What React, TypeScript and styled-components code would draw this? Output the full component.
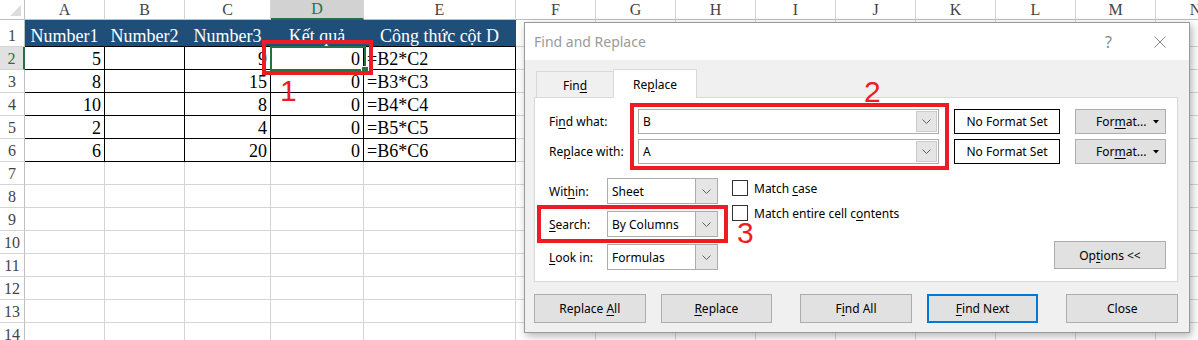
import React from "react";
import styled, { createGlobalStyle, css } from "styled-components";

const GlobalStyle = createGlobalStyle`
  html, body { margin: 0; padding: 0; background: #fff; }
  body { width: 1198px; height: 340px; overflow: hidden; font-family: "Liberation Serif", serif; }
`;

const COLS = "25px 80px 80px 86px 93px 152px repeat(9, 80px)";
const RED = "#ed1c24";
const GREEN = "#217346";

const Screen = styled.div`
  position: relative;
  width: 1198px;
  height: 340px;
  overflow: hidden;
  background: #fff;
`;

const Sheet = styled.div`
  display: flex;
  flex-direction: column;
  font-family: "Liberation Serif", serif;
`;

const Row = styled.div<{ $h: number }>`
  display: grid;
  grid-template-columns: ${COLS};
  height: ${(p) => p.$h}px;
`;

const Corner = styled.div`
  box-sizing: border-box;
  border-right: 1px solid #bfbfbf;
  border-bottom: 1px solid #bfbfbf;
  display: flex;
  align-items: flex-end;
  justify-content: flex-end;
  padding: 0 3px 3px 0;
`;

const ColHead = styled.div<{ $sel?: boolean }>`
  box-sizing: border-box;
  display: flex;
  align-items: center;
  justify-content: center;
  font-size: 16px;
  line-height: 16px;
  color: #444;
  border-right: 1px solid #d4d4d4;
  border-bottom: 1px solid #bfbfbf;
  ${(p) =>
    p.$sel &&
    css`
      background: #d2d2d2;
      color: ${GREEN};
      border-bottom: 2px solid ${GREEN};
    `}
`;

const RowHead = styled.div<{ $sel?: boolean }>`
  box-sizing: border-box;
  display: flex;
  align-items: flex-end;
  justify-content: center;
  padding-bottom: 1px;
  font-size: 16px;
  line-height: 18px;
  color: #444;
  border-right: 1px solid #bfbfbf;
  border-bottom: 1px solid #d4d4d4;
  ${(p) =>
    p.$sel &&
    css`
      background: #e1e1e1;
      color: ${GREEN};
      border-right: 2px solid ${GREEN};
    `}
`;

type Kind = "head" | "data" | "plain";

const Cell = styled.div<{ $kind: Kind; $align?: "left" | "right" | "center" }>`
  box-sizing: border-box;
  display: flex;
  align-items: flex-end;
  padding: 0 3px 1px 3px;
  font-size: 18px;
  line-height: 18px;
  white-space: nowrap;
  overflow: visible;
  justify-content: ${(p) =>
    p.$align === "right" ? "flex-end" : p.$align === "center" ? "center" : "flex-start"};
  ${(p) =>
    p.$kind === "head"
      ? css`
          background: #1f4e78;
          color: #fff;
          border-right: 1px solid #1f4e78;
          border-bottom: 1px solid #000;
        `
      : p.$kind === "data"
      ? css`
          color: #000;
          border-right: 1px solid #000;
          border-bottom: 1px solid #000;
        `
      : css`
          border-right: 1px solid #d4d4d4;
          border-bottom: 1px solid #d4d4d4;
        `}
`;

/* ---------- overlays ---------- */

const Selection = styled.div`
  position: absolute;
  left: 270px;
  top: 46px;
  width: 96px;
  height: 25px;
  box-sizing: border-box;
  border: 2px solid ${GREEN};
`;

const FillHandle = styled.div`
  position: absolute;
  right: -5px;
  bottom: -5px;
  width: 6px;
  height: 6px;
  background: ${GREEN};
  border: 1px solid #fff;
`;

const RedBox = styled.div<{ $x: number; $y: number; $w: number; $h: number }>`
  position: absolute;
  left: ${(p) => p.$x}px;
  top: ${(p) => p.$y}px;
  width: ${(p) => p.$w}px;
  height: ${(p) => p.$h}px;
  box-sizing: border-box;
  border: 4px solid ${RED};
  z-index: 5;
`;

const Marker = styled.div<{ $x: number; $y: number }>`
  position: absolute;
  left: ${(p) => p.$x}px;
  top: ${(p) => p.$y}px;
  font-family: "Liberation Sans", Arial, sans-serif;
  font-size: 30px;
  line-height: 30px;
  color: ${RED};
  z-index: 5;
`;

/* ---------- dialog ---------- */

const Dialog = styled.div`
  position: absolute;
  left: 524px;
  top: 22px;
  width: 666px;
  height: 311px;
  box-sizing: border-box;
  border: 1px solid #9a9a9a;
  background: #f0f0f0;
  box-shadow: 2px 3px 8px rgba(0, 0, 0, 0.3);
  display: flex;
  flex-direction: column;
  font-family: "Noto Sans", "Open Sans", sans-serif;
  font-size: 12px;
  color: #000;
  z-index: 3;
`;

const TitleBar = styled.div`
  height: 37px;
  flex: none;
  background: #fff;
  display: flex;
  align-items: center;
  padding: 0 23px 0 9px;
`;

const Title = styled.div`
  font-size: 14px;
  color: #9a9a9a;
`;

const HelpMark = styled.div`
  margin-left: auto;
  font-size: 16px;
  color: #8a8a8a;
  margin-right: 42px;
`;

const Body = styled.div`
  flex: 1;
  display: flex;
  flex-direction: column;
  padding: 9px 11px 0 9px;
`;

const TabStrip = styled.div`
  display: flex;
  align-items: flex-end;
  height: 29px;
  padding-left: 2px;
  margin-bottom: -1px;
  position: relative;
  z-index: 1;
`;

const Tab = styled.div<{ $active?: boolean; $w: number }>`
  box-sizing: border-box;
  width: ${(p) => p.$w}px;
  display: flex;
  align-items: center;
  justify-content: center;
  border: 1px solid #d9d9d9;
  border-bottom: none;
  ${(p) =>
    p.$active
      ? css`
          height: 29px;
          background: #fff;
        `
      : css`
          height: 26px;
          margin-bottom: 1px;
          background: #f0f0f0;
          border-right: none;
          padding-top: 2px;
        `}
`;

const Panel = styled.div`
  box-sizing: border-box;
  height: 185px;
  background: #fff;
  border: 1px solid #d9d9d9;
  padding: 11px 11px 0 14px;
  display: flex;
  flex-direction: column;
`;

const TopGrid = styled.div`
  display: grid;
  grid-template-columns: 74px 301px 106px 91px;
  grid-auto-rows: 25px;
  column-gap: 15px;
  row-gap: 5px;
`;

const FieldLabel = styled.div`
  display: flex;
  align-items: center;
  white-space: nowrap;
`;

const Key = styled.span`
  text-decoration: underline;
  text-underline-offset: 2px;
`;

const Combo = styled.div`
  box-sizing: border-box;
  display: flex;
  border: 1px solid #acacac;
  background: #fff;
`;

const ComboValue = styled.div`
  flex: 1;
  display: flex;
  align-items: center;
  padding-left: 4px;
`;

const ComboDrop = styled.div`
  box-sizing: border-box;
  width: 21px;
  margin: 1px;
  background: #e5e5e5;
  border: 1px solid #cccccc;
  display: flex;
  align-items: center;
  justify-content: center;
`;

const FormatStatus = styled.div`
  box-sizing: border-box;
  border: 1px solid #000;
  background: #fff;
  display: flex;
  align-items: center;
  justify-content: center;
  white-space: nowrap;
`;

const Button = styled.div<{ $w?: number; $h?: number; $focus?: boolean; $gapBefore?: boolean }>`
  box-sizing: border-box;
  width: ${(p) => p.$w ?? 112}px;
  height: ${(p) => p.$h ?? 29}px;
  background: #e1e1e1;
  border: ${(p) => (p.$focus ? "2px solid #0078d7" : "1px solid #adadad")};
  display: flex;
  align-items: center;
  justify-content: center;
  white-space: nowrap;
  margin-left: ${(p) => (p.$gapBefore ? "13px" : "0")};
`;

const FormatButton = styled.div`
  box-sizing: border-box;
  background: #e1e1e1;
  border: 1px solid #adadad;
  display: flex;
  align-items: center;
  padding: 0 6px 0 20px;
  white-space: nowrap;
`;

const Caret = styled.svg`
  margin-left: auto;
`;

const Lower = styled.div`
  display: flex;
  margin-top: 14px;
`;

const SelectGrid = styled.div`
  display: grid;
  grid-template-columns: 58px 111px;
  grid-auto-rows: 26px;
  row-gap: 7px;
`;

const Select = styled.div`
  box-sizing: border-box;
  display: flex;
  border: 1px solid #acacac;
  background: #fff;
`;

const SelectDrop = styled.div`
  width: 21px;
  background: #e5e5e5;
  border-left: 1px solid #acacac;
  display: flex;
  align-items: center;
  justify-content: center;
`;

const CheckList = styled.div`
  display: flex;
  flex-direction: column;
  gap: 9px;
  margin-left: 14px;
  padding-top: 2px;
`;

const CheckItem = styled.div`
  display: flex;
  align-items: center;
  gap: 6px;
  height: 16px;
  white-space: nowrap;
`;

const CheckBox = styled.div`
  box-sizing: border-box;
  width: 16px;
  height: 16px;
  border: 1px solid #333;
  background: #fff;
`;

const OptionsSlot = styled.div`
  margin-left: auto;
  align-self: flex-end;
  margin-bottom: 1px;
`;

const ButtonRow = styled.div`
  display: flex;
  gap: 15px;
  margin-top: 12px;
`;

const Chevron = () => (
  <svg width="9" height="5" viewBox="0 0 9 5">
    <polyline points="0.5,0.5 4.5,4.5 8.5,0.5" fill="none" stroke="#606060" strokeWidth="1" />
  </svg>
);

const CloseIcon = () => (
  <svg width="12" height="12" viewBox="0 0 12 12">
    <line x1="0.5" y1="0.5" x2="11.5" y2="11.5" stroke="#8a8a8a" strokeWidth="1" />
    <line x1="11.5" y1="0.5" x2="0.5" y2="11.5" stroke="#8a8a8a" strokeWidth="1" />
  </svg>
);

const letters = ["A", "B", "C", "D", "E", "F", "G", "H", "I", "J", "K", "L", "M", "N"];
const headers = ["Number1", "Number2", "Number3", "Kết quả", "Công thức cột D"];
const data = [
  [5, 9],
  [8, 15],
  [10, 8],
  [2, 4],
  [6, 20],
];

export default function App() {
  return (
    <Screen>
      <GlobalStyle />
      <Sheet>
        <Row $h={20}>
          <Corner>
            <svg width="11" height="11" viewBox="0 0 11 11">
              <polygon points="11,0 11,11 0,11" fill="#dcdcdc" />
            </svg>
          </Corner>
          {letters.map((l) => (
            <ColHead key={l} $sel={l === "D"}>
              {l}
            </ColHead>
          ))}
        </Row>
        <Row $h={27}>
          <RowHead>1</RowHead>
          {headers.map((h) => (
            <Cell key={h} $kind="head" $align="center">
              {h}
            </Cell>
          ))}
          {letters.slice(5).map((l) => (
            <Cell key={l} $kind="plain" />
          ))}
        </Row>
        {data.map(([a, c], i) => (
          <Row $h={23} key={i}>
            <RowHead $sel={i === 0}>{i + 2}</RowHead>
            <Cell $kind="data" $align="right">{a}</Cell>
            <Cell $kind="data" />
            <Cell $kind="data" $align="right">{c}</Cell>
            <Cell $kind="data" $align="right">0</Cell>
            <Cell $kind="data" $align="left">{`=B${i + 2}*C${i + 2}`}</Cell>
            {letters.slice(5).map((l) => (
              <Cell key={l} $kind="plain" />
            ))}
          </Row>
        ))}
        {Array.from({ length: 8 }, (_, i) => (
          <Row $h={23} key={`e${i}`}>
            <RowHead>{i + 7}</RowHead>
            {letters.map((l) => (
              <Cell key={l} $kind="plain" />
            ))}
          </Row>
        ))}
      </Sheet>

      <Selection>
        <FillHandle />
      </Selection>

      <Dialog>
        <TitleBar>
          <Title>Find and Replace</Title>
          <HelpMark>?</HelpMark>
          <CloseIcon />
        </TitleBar>
        <Body>
          <TabStrip>
            <Tab $w={77}>
              Fin<Key>d</Key>
            </Tab>
            <Tab $w={84} $active>
              Re<Key>p</Key>lace
            </Tab>
          </TabStrip>
          <Panel>
            <TopGrid>
              <FieldLabel>
                Fi<Key>n</Key>d what:
              </FieldLabel>
              <Combo>
                <ComboValue>B</ComboValue>
                <ComboDrop>
                  <Chevron />
                </ComboDrop>
              </Combo>
              <FormatStatus>No Format Set</FormatStatus>
              <FormatButton>
                For<Key>m</Key>at...
                <Caret width="6" height="4" viewBox="0 0 6 4">
                  <polygon points="0,0 6,0 3,3.5" fill="#000" />
                </Caret>
              </FormatButton>

              <FieldLabel>
                Re<Key>p</Key>lace with:
              </FieldLabel>
              <Combo>
                <ComboValue>A</ComboValue>
                <ComboDrop>
                  <Chevron />
                </ComboDrop>
              </Combo>
              <FormatStatus>No Format Set</FormatStatus>
              <FormatButton>
                For<Key>m</Key>at...
                <Caret width="6" height="4" viewBox="0 0 6 4">
                  <polygon points="0,0 6,0 3,3.5" fill="#000" />
                </Caret>
              </FormatButton>
            </TopGrid>

            <Lower>
              <SelectGrid>
                <FieldLabel>
                  Wit<Key>h</Key>in:
                </FieldLabel>
                <Select>
                  <ComboValue>Sheet</ComboValue>
                  <SelectDrop>
                    <Chevron />
                  </SelectDrop>
                </Select>
                <FieldLabel>
                  <Key>S</Key>earch:
                </FieldLabel>
                <Select>
                  <ComboValue>By Columns</ComboValue>
                  <SelectDrop>
                    <Chevron />
                  </SelectDrop>
                </Select>
                <FieldLabel>
                  <Key>L</Key>ook in:
                </FieldLabel>
                <Select>
                  <ComboValue>Formulas</ComboValue>
                  <SelectDrop>
                    <Chevron />
                  </SelectDrop>
                </Select>
              </SelectGrid>

              <CheckList>
                <CheckItem>
                  <CheckBox />
                  <span>
                    Match <Key>c</Key>ase
                  </span>
                </CheckItem>
                <CheckItem>
                  <CheckBox />
                  <span>
                    Match entire cell c<Key>o</Key>ntents
                  </span>
                </CheckItem>
              </CheckList>

              <OptionsSlot>
                <Button $w={112} $h={28}>
                  Op<Key>t</Key>ions &lt;&lt;
                </Button>
              </OptionsSlot>
            </Lower>
          </Panel>

          <ButtonRow>
            <Button>
              Replace&nbsp;<Key>A</Key>ll
            </Button>
            <Button>
              <Key>R</Key>eplace
            </Button>
            <Button $gapBefore>
              F<Key>i</Key>nd All
            </Button>
            <Button $focus>
              <Key>F</Key>ind Next
            </Button>
            <Button $gapBefore>Close</Button>
          </ButtonRow>
        </Body>
      </Dialog>

      <RedBox $x={262} $y={40} $w={111} $h={35} />
      <Marker $x={280} $y={76}>1</Marker>
      <RedBox $x={630} $y={103} $w={319} $h={67} />
      <Marker $x={864} $y={77}>2</Marker>
      <RedBox $x={537} $y={205} $w={191} $h={38} />
      <Marker $x={737} $y={218}>3</Marker>
    </Screen>
  );
}
